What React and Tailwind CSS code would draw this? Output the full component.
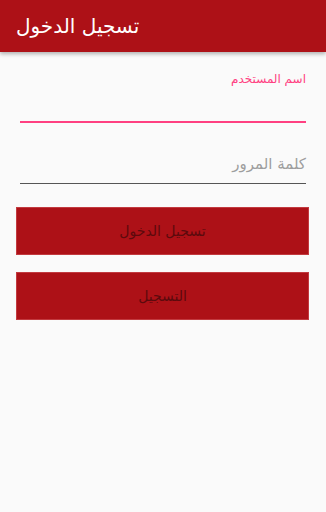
import React from 'react';

const arabicFont = { fontFamily: '"DejaVu Sans", "Noto Sans", sans-serif' };

const App = () => {
  return (
    <div className="w-[326px] h-[512px] bg-[#fafafa] flex flex-col" style={arabicFont}>
      {/* Toolbar */}
      <div className="h-[52px] bg-[#ad1117] shadow-[0_2px_4px_rgba(0,0,0,0.3)] flex items-center px-4">
        <span className="text-white text-[20px]">تسجيل الدخول</span>
      </div>

      <div dir="rtl" className="flex flex-col px-5 pt-[19px]">
        {/* Username */}
        <div className="text-[12px] text-[#ff4081] leading-4 h-4">اسم المستخدم</div>
        <div className="h-[34px]" />
        <div className="h-[2px] bg-[#ff4081]" />

        {/* Password */}
        <div className="text-[15px] text-[#9e9e9e] leading-5 mt-[31px]">كلمة المرور</div>
        <div className="h-[9px]" />
        <div className="h-px bg-[#555555]" />
      </div>

      <div dir="rtl" className="flex flex-col gap-[17px] pl-4 pr-[17px] mt-[23px]">
        <button className="h-[48px] bg-[#ad1117] border border-[#c23a3f] text-[14px] text-[#5c0a0d]">
          تسجيل الدخول
        </button>
        <button className="h-[48px] bg-[#ad1117] border border-[#c23a3f] text-[14px] text-[#5c0a0d]">
          التسجيل
        </button>
      </div>
    </div>
  );
};

export default App;
